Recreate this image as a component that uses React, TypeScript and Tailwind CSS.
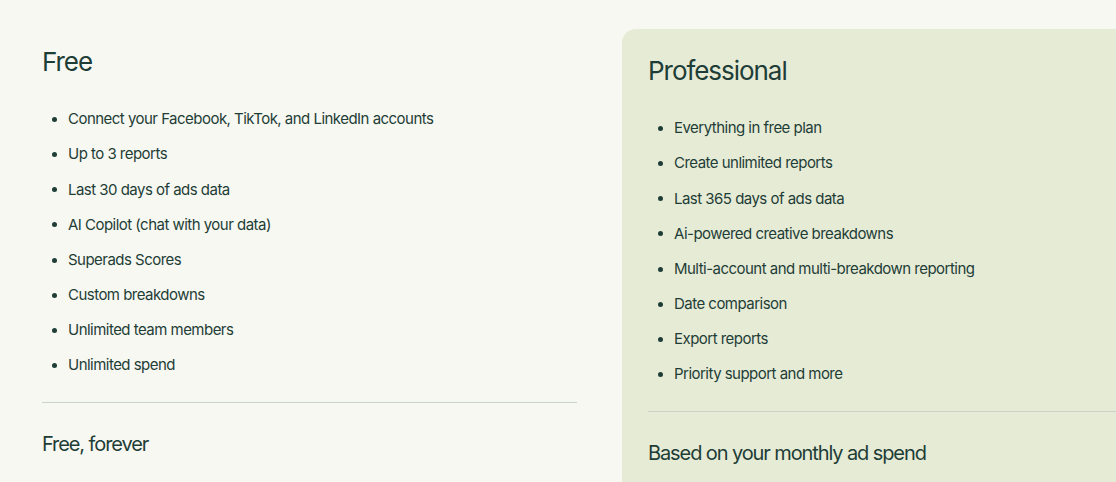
import React from 'react';

const freeFeatures = [
  'Connect your Facebook, TikTok, and LinkedIn accounts',
  'Up to 3 reports',
  'Last 30 days of ads data',
  'AI Copilot (chat with your data)',
  'Superads Scores',
  'Custom breakdowns',
  'Unlimited team members',
  'Unlimited spend',
];

const proFeatures = [
  'Everything in free plan',
  'Create unlimited reports',
  'Last 365 days of ads data',
  'Ai-powered creative breakdowns',
  'Multi-account and multi-breakdown reporting',
  'Date comparison',
  'Export reports',
  'Priority support and more',
];

function FeatureList({ items }: { items: string[] }) {
  return (
    <ul className="mt-[24px] flex flex-col">
      {items.map((item) => (
        <li key={item} className="flex items-center h-[35.15px] text-[15px] tracking-[-0.035em]">
          <span className="w-[5px] h-[5px] rounded-full bg-[#1e3d36] ml-[10px] mr-[11px] shrink-0" />
          {item}
        </li>
      ))}
    </ul>
  );
}

function PlanColumn({ title, items, footer }: { title: string; items: string[]; footer: string }) {
  return (
    <div>
      <h2 className="text-[26px] leading-[32px] tracking-[-0.04em]">{title}</h2>
      <FeatureList items={items} />
      <div className="mt-[19px] border-t border-[#c9d3c9]" />
      <p className="mt-[27px] text-[20px] leading-[28px] tracking-[-0.055em]">{footer}</p>
    </div>
  );
}

export default function App() {
  return (
    <div
      className="w-[1116px] h-[482px] overflow-hidden bg-[#f7f8f2] text-[#1e3d36]"
      style={{ fontFamily: 'Inter, "Noto Sans", sans-serif' }}
    >
      <div className="flex gap-[45px] pl-[42px] pt-[46px]">
        <div className="w-[535px] shrink-0">
          <PlanColumn title="Free" items={freeFeatures} footer="Free, forever" />
        </div>
        <div className="w-[590px] shrink-0 -mt-[17px] bg-[#e6ebd6] rounded-[14px] pl-[26px] pt-[26px] pb-[40px]">
          <PlanColumn title="Professional" items={proFeatures} footer="Based on your monthly ad spend" />
        </div>
      </div>
    </div>
  );
}
